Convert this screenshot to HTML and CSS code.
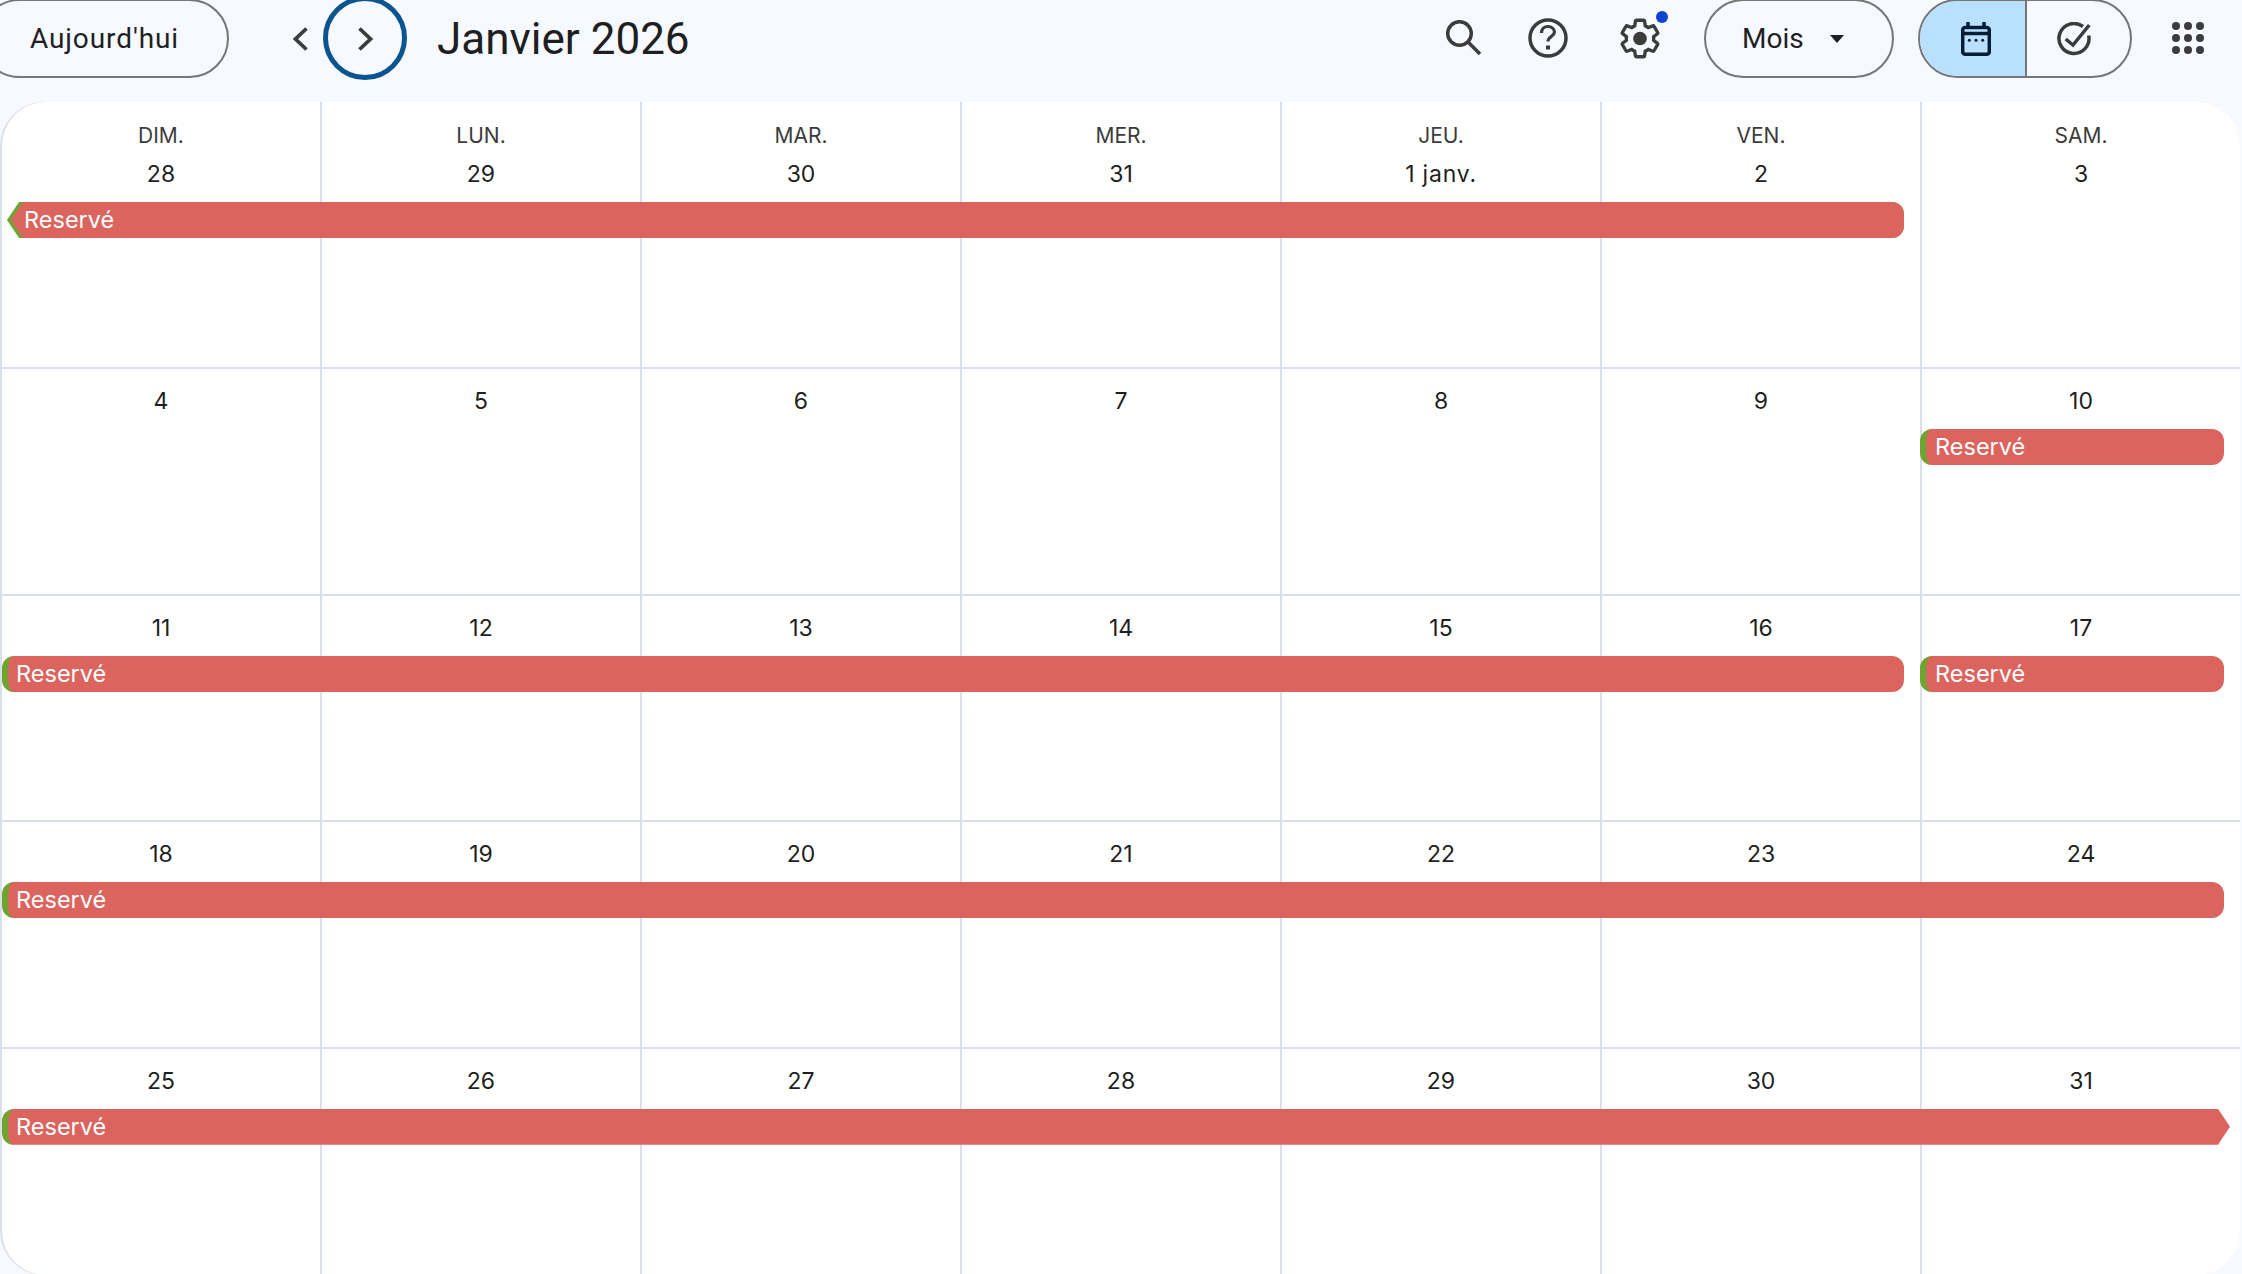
FILE: index.html
```html
<!DOCTYPE html>
<html lang="fr">
<head>
<meta charset="UTF-8">
<title>Agenda - Janvier 2026</title>
<link rel="stylesheet" href="styles.css">
</head>
<body>

<header class="topbar">
  <button class="btn-today">Aujourd'hui</button>
  <div class="nav-arrows">
    <button class="arrow">
      <svg width="24" height="26" viewBox="0 0 24 26"><path d="M18.500 2.500 7.500 13l11 10.500" class="line-arrow"/></svg>
    </button>
    <button class="arrow-focus">
      <svg width="24" height="26" viewBox="0 0 24 26"><path d="M6.500 2.500 17.500 13l-11 10.500" class="line-arrow"/></svg>
    </button>
  </div>
  <h1 class="title">Janvier 2026</h1>

  <div class="tools">
    <button class="icon-btn icon-search">
      <svg width="36" height="36" viewBox="0 0 36 36"><circle cx="13.500" cy="13.500" r="11.800" class="line"/><path d="M22 22 34 34" class="line"/></svg>
    </button>
    <button class="icon-btn icon-help">
      <svg width="40" height="40" viewBox="0 0 40 40"><circle cx="20" cy="20" r="18" class="line"/><path d="M13.500 15c0-4 3-6.500 6.500-6.500s6.500 2.500 6.500 5.500c0 4-6.500 4.500-6.500 9.500" class="line-help"/><rect x="18" y="27.500" width="4" height="4" class="dot"/></svg>
    </button>
    <button class="icon-btn icon-settings">
      <svg width="40" height="41" viewBox="1.500 1.300 21 21.400"><path class="line-gear" d="M19.140 12.940c.04-.3.06-.61.06-.94 0-.32-.02-.64-.07-.94l2.030-1.580c.18-.14.23-.41.12-.61l-1.920-3.320c-.12-.22-.37-.29-.59-.22l-2.390.96c-.5-.38-1.030-.7-1.620-.94l-.36-2.540c-.04-.24-.24-.41-.48-.41h-3.840c-.24 0-.43.17-.47.41l-.36 2.540c-.59.24-1.130.57-1.620.94l-2.390-.96c-.22-.08-.47 0-.59.22L2.740 8.870c-.12.21-.08.47.12.61l2.030 1.580c-.05.3-.09.63-.09.94s.02.64.07.94l-2.030 1.580c-.18.14-.23.41-.12.61l1.920 3.320c.12.22.37.29.59.22l2.390-.96c.5.38 1.030.7 1.620.94l.36 2.540c.05.24.24.41.48.41h3.840c.24 0 .44-.17.47-.41l.36-2.540c.59-.24 1.130-.56 1.620-.94l2.390.96c.22.08.47 0 .59-.22l1.920-3.320c.12-.22.07-.47-.12-.61l-2.010-1.580z"/><circle cx="12" cy="12" r="3.600" class="dot"/></svg>
      <span class="notif"></span>
    </button>
  </div>

  <button class="btn-view">Mois<span class="caret"></span></button>

  <div class="switch">
    <button class="switch-item switch-on">
      <svg width="30" height="34" viewBox="0 0 30 34"><rect x="1.700" y="5.500" width="26.600" height="26.700" rx="2.500" class="line-cal"/><path d="M1.700 11.500h26.600M7 0v6M23 0v6" class="line-cal"/><circle cx="8.300" cy="18.300" r="1.500" class="dot-cal"/><circle cx="15" cy="18.300" r="1.500" class="dot-cal"/><circle cx="21.700" cy="18.300" r="1.500" class="dot-cal"/></svg>
    </button>
    <button class="switch-item switch-off">
      <svg width="34" height="34" viewBox="0 0 34 34"><path d="M26 4.500A15 15 0 1 0 31.700 13.500" class="line"/><path d="m8.700 17 7.300 6L32.300 3" class="line"/></svg>
    </button>
  </div>

  <button class="apps">
    <span></span><span></span><span></span>
    <span></span><span></span><span></span>
    <span></span><span></span><span></span>
  </button>
</header>

<main class="month">

  <section class="week week-first">
    <div class="day"><span class="day-name">DIM.</span><span class="day-num">28</span></div>
    <div class="day"><span class="day-name">LUN.</span><span class="day-num">29</span></div>
    <div class="day"><span class="day-name">MAR.</span><span class="day-num">30</span></div>
    <div class="day"><span class="day-name">MER.</span><span class="day-num">31</span></div>
    <div class="day"><span class="day-name">JEU.</span><span class="day-num day-num-month">1 janv.</span></div>
    <div class="day"><span class="day-name">VEN.</span><span class="day-num">2</span></div>
    <div class="day"><span class="day-name">SAM.</span><span class="day-num">3</span></div>
    <div class="event event-from-prev span-6">Reservé</div>
  </section>

  <section class="week">
    <div class="day"><span class="day-num">4</span></div>
    <div class="day"><span class="day-num">5</span></div>
    <div class="day"><span class="day-num">6</span></div>
    <div class="day"><span class="day-num">7</span></div>
    <div class="day"><span class="day-num">8</span></div>
    <div class="day"><span class="day-num">9</span></div>
    <div class="day"><span class="day-num">10</span></div>
    <div class="event start-sat">Reservé</div>
  </section>

  <section class="week">
    <div class="day"><span class="day-num">11</span></div>
    <div class="day"><span class="day-num">12</span></div>
    <div class="day"><span class="day-num">13</span></div>
    <div class="day"><span class="day-num">14</span></div>
    <div class="day"><span class="day-num">15</span></div>
    <div class="day"><span class="day-num">16</span></div>
    <div class="day"><span class="day-num">17</span></div>
    <div class="event span-6">Reservé</div>
    <div class="event start-sat">Reservé</div>
  </section>

  <section class="week">
    <div class="day"><span class="day-num">18</span></div>
    <div class="day"><span class="day-num">19</span></div>
    <div class="day"><span class="day-num">20</span></div>
    <div class="day"><span class="day-num">21</span></div>
    <div class="day"><span class="day-num">22</span></div>
    <div class="day"><span class="day-num">23</span></div>
    <div class="day"><span class="day-num">24</span></div>
    <div class="event span-7">Reservé</div>
  </section>

  <section class="week">
    <div class="day"><span class="day-num">25</span></div>
    <div class="day"><span class="day-num">26</span></div>
    <div class="day"><span class="day-num">27</span></div>
    <div class="day"><span class="day-num">28</span></div>
    <div class="day"><span class="day-num">29</span></div>
    <div class="day"><span class="day-num">30</span></div>
    <div class="day"><span class="day-num">31</span></div>
    <div class="event event-to-next span-7">Reservé</div>
  </section>

</main>

</body>
</html>
```

FILE: styles.css
```css
* {
  box-sizing: border-box;
  margin: 0;
  padding: 0;
}

html, body {
  height: 1274px;
  overflow: hidden;
}

body {
  font-family: "Roboto", "Liberation Sans", sans-serif;
  background-color: #f6f9ff;
  color: #1f1f1f;
}

button {
  font-family: inherit;
  color: inherit;
  background: none;
  border: none;
}

/* Barre du haut */
.topbar {
  height: 103px;
  display: flex;
  align-items: flex-start;
  margin-top: -1px;
}

.btn-today {
  flex: none;
  width: 249px;
  height: 79px;
  margin-left: -20px;
  border: 2px solid #747775;
  border-radius: 40px;
  font-size: 28px;
  letter-spacing: .9px;
}

.nav-arrows {
  display: flex;
  align-items: center;
  margin-left: 48px;
  height: 78px;
}

.arrow {
  width: 46px;
  padding-top: 2px;
  display: flex;
  justify-content: center;
}

.arrow-focus {
  width: 84px;
  height: 84px;
  margin-top: -1px;
  padding-top: 2px;
  border: 5px solid #0b5490;
  border-radius: 50%;
  display: flex;
  align-items: center;
  justify-content: center;
}

.line {
  fill: none;
  stroke: #3c3c3c;
  stroke-width: 3.500;
}

.line-arrow {
  fill: none;
  stroke: #3c3c3c;
  stroke-width: 3.800;
}

.line-help {
  fill: none;
  stroke: #3c3c3c;
  stroke-width: 3.200;
}

.line-gear {
  fill: none;
  stroke: #3c3c3c;
  stroke-width: 1.750;
}

.dot {
  fill: #3c3c3c;
}

.title {
  margin-left: 30px;
  height: 78px;
  line-height: 80px;
  font-size: 44px;
  font-weight: 400;
}

.tools {
  display: flex;
  align-items: center;
  height: 78px;
  margin-left: auto;
}

.icon-btn {
  display: flex;
  position: relative;
}

.icon-help {
  margin-left: 46px;
}

.icon-settings {
  margin-left: 52px;
}

.notif {
  position: absolute;
  top: -7px;
  right: -8px;
  width: 12px;
  height: 12px;
  border-radius: 50%;
  background-color: #0b43d1;
}

.btn-view {
  width: 190px;
  height: 79px;
  margin-left: 44px;
  padding-left: 36px;
  border: 2px solid #747775;
  border-radius: 40px;
  font-size: 28px;
  display: flex;
  align-items: center;
  gap: 26px;
}

.caret {
  width: 0;
  height: 0;
  border-left: 7.500px solid transparent;
  border-right: 7.500px solid transparent;
  border-top: 8px solid #1f1f1f;
}

.switch {
  display: flex;
  width: 214px;
  height: 79px;
  margin-left: 24px;
  border: 2px solid #747775;
  border-radius: 40px;
  overflow: hidden;
}

.switch-item {
  flex: 1;
  display: flex;
  align-items: center;
  justify-content: center;
}

.switch-on {
  flex: 0 0 107px;
  padding-left: 7px;
  background-color: #b9e0ff;
  border-right: 2px solid #747775;
}

.switch-off {
  padding-right: 9px;
}

.line-cal {
  fill: none;
  stroke: #071d36;
  stroke-width: 3.500;
}

.dot-cal {
  fill: #071d36;
}

.apps {
  display: grid;
  grid-template-columns: repeat(3, 8px);
  grid-auto-rows: 8px;
  gap: 4px;
  margin: 23px 38px 0 40px;
}

.apps span {
  border-radius: 50%;
  background-color: #3c3c3c;
}

/* Calendrier */
.month {
  height: 1173px;
  width: 2240px;
  background-color: #fff;
  box-shadow: inset 2px 0 0 #d9e0ec;
  border-radius: 44px;
  overflow: hidden;
  display: grid;
  grid-template-rows: 267px repeat(4, 226.500px);
}

.week {
  display: grid;
  grid-template-columns: repeat(7, 320px);
  grid-template-rows: 60.250px 36px 1fr;
  border-bottom: 2px solid #d9e0ec;
}

.week:last-child {
  border-bottom: none;
}

.week-first {
  grid-template-rows: 100px 36px 1fr;
}

.day {
  grid-row: 1 / 4;
  border-left: 2px solid #d9e0ec;
  display: flex;
  flex-direction: column;
  align-items: center;
  padding-top: 14px;
  font-family: "Inter", "Roboto", sans-serif;
  font-size: 23px;
}

.day:nth-child(1) { grid-column: 1; border-left: none; padding-left: 2px; }
.day:nth-child(2) { grid-column: 2; }
.day:nth-child(3) { grid-column: 3; }
.day:nth-child(4) { grid-column: 4; }
.day:nth-child(5) { grid-column: 5; }
.day:nth-child(6) { grid-column: 6; }
.day:nth-child(7) { grid-column: 7; }

.week-first .day {
  padding-top: 14px;
}

.day-name {
  font-size: 21px;
  line-height: 40px;
  color: #3c3c3c;
}

.day-num {
  line-height: 36px;
}

.day-num-month {
  letter-spacing: .8px;
}

/* Evenements */
.event {
  grid-row: 2;
  z-index: 1;
  height: 36px;
  line-height: 36px;
  margin-right: 16px;
  margin-left: 2px;
  padding-left: 8px;
  font-family: "Inter", "Roboto", sans-serif;
  font-size: 23.500px;
  color: #fff;
  background-color: #db645e;
  border-left: 6px solid #6da52f;
  border-radius: 12px;
  overflow: hidden;
}

.span-6 { grid-column: 1 / span 6; }
.span-7 { grid-column: 1 / span 7; }

.start-sat {
  grid-column: 7;
  margin-left: 0;
  padding-left: 9px;
}

.event-from-prev {
  position: relative;
  isolation: isolate;
  margin-left: 7px;
  padding-left: 17px;
  border-left: none;
  border-radius: 0 12px 12px 0;
  background-color: #6da52f;
  clip-path: polygon(12px 0, 100% 0, 100% 100%, 12px 100%, 0 50%);
}

.event-from-prev::before {
  content: "";
  position: absolute;
  inset: 0 0 0 4px;
  z-index: -1;
  background-color: #db645e;
  clip-path: polygon(12px 0, 100% 0, 100% 100%, 12px 100%, 0 50%);
}

.event-to-next {
  margin-right: 10px;
  border-radius: 12px 0 0 12px;
  clip-path: polygon(0 0, calc(100% - 12px) 0, 100% 50%, calc(100% - 12px) 100%, 0 100%);
}
```
